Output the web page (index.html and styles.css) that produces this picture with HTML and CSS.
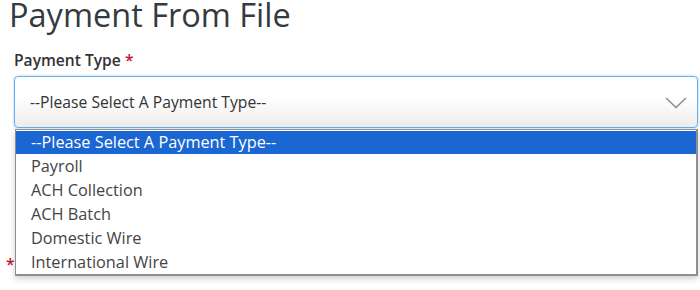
FILE: index.html
```html
<!DOCTYPE html>
<html lang="en">
<head>
   <meta charset="UTF-8">
   <meta name="viewport" content="width=device-width, initial-scale=1.0">
   <title>Payment From File</title>
   <link rel="stylesheet" href="styles.css">
</head>
<body>
   <h1 class="title">Payment From File</h1>
   <div class="field">
      <label class="label">Payment Type <span class="req">*</span></label>
      <div class="select-wrap">
         <div class="select">
            <span>--Please Select A Payment Type--</span>
            <svg class="chevron" width="22" height="12" viewBox="0 0 22 12">
               <path d="M1 1 L11 10.5 L21 1" fill="none" stroke="#8a8a8a" stroke-width="1.4"/>
            </svg>
         </div>
         <ul class="options">
            <li class="selected">--Please Select A Payment Type--</li>
            <li>Payroll</li>
            <li>ACH Collection</li>
            <li>ACH Batch</li>
            <li>Domestic Wire</li>
            <li>International Wire</li>
         </ul>
      </div>
   </div>
   <div class="field next">
      <label class="label"><span class="req">*</span> File</label>
   </div>
</body>
</html>
```

FILE: styles.css
```css
*{
   margin: 0;
   padding: 0;
   box-sizing: border-box;
}

html, body{
   min-height: 290px;
}

body{
   font-family: "Open Sans", "Liberation Sans", sans-serif;
   color: #333;
   background: #fff;
}

.title{
   font-size: 32.5px;
   font-weight: 400;
   line-height: 36px;
   margin: -3px 0 0 9px;
   color: #343a40;
}

.field{
   padding: 16px 0 0 14px;
   width: 698px;
}

.label{
   display: block;
   font-size: 15.6px;
   font-weight: 600;
   line-height: 22px;
   margin-bottom: 5px;
}

.req{
   color: #c8102e;
}

.select-wrap{
   position: relative;
}

.select{
   height: 52px;
   border: 1px solid #66afe9;
   border-radius: 4px;
   box-shadow: 0 0 3px rgba(102, 175, 233, 0.6);
   background: linear-gradient(#fff 40%, #ececec);
   display: flex;
   align-items: center;
   justify-content: space-between;
   padding: 0 10px 0 15px;
   font-size: 15.7px;
   color: #333;
}

.chevron{
   margin-top: 2px;
}

.options{
   position: absolute;
   top: 53px;
   left: 1px;
   right: 0;
   list-style: none;
   background: #fff;
   border: 1px solid #8f8f8f;
   border-right-width: 2px;
   border-bottom-width: 2px;
   box-shadow: 0 3px 6px rgba(0, 0, 0, 0.18);
   padding: 1px 0 0;
   z-index: 2;
}

.options li{
   font-size: 16.3px;
   line-height: 24px;
   padding-left: 15px;
   color: #444;
}

.options li.selected{
   background: #1a66d2;
   color: #fff;
   line-height: 23px;
}

.next{
   padding: 125px 0 0 6px;
}
```
